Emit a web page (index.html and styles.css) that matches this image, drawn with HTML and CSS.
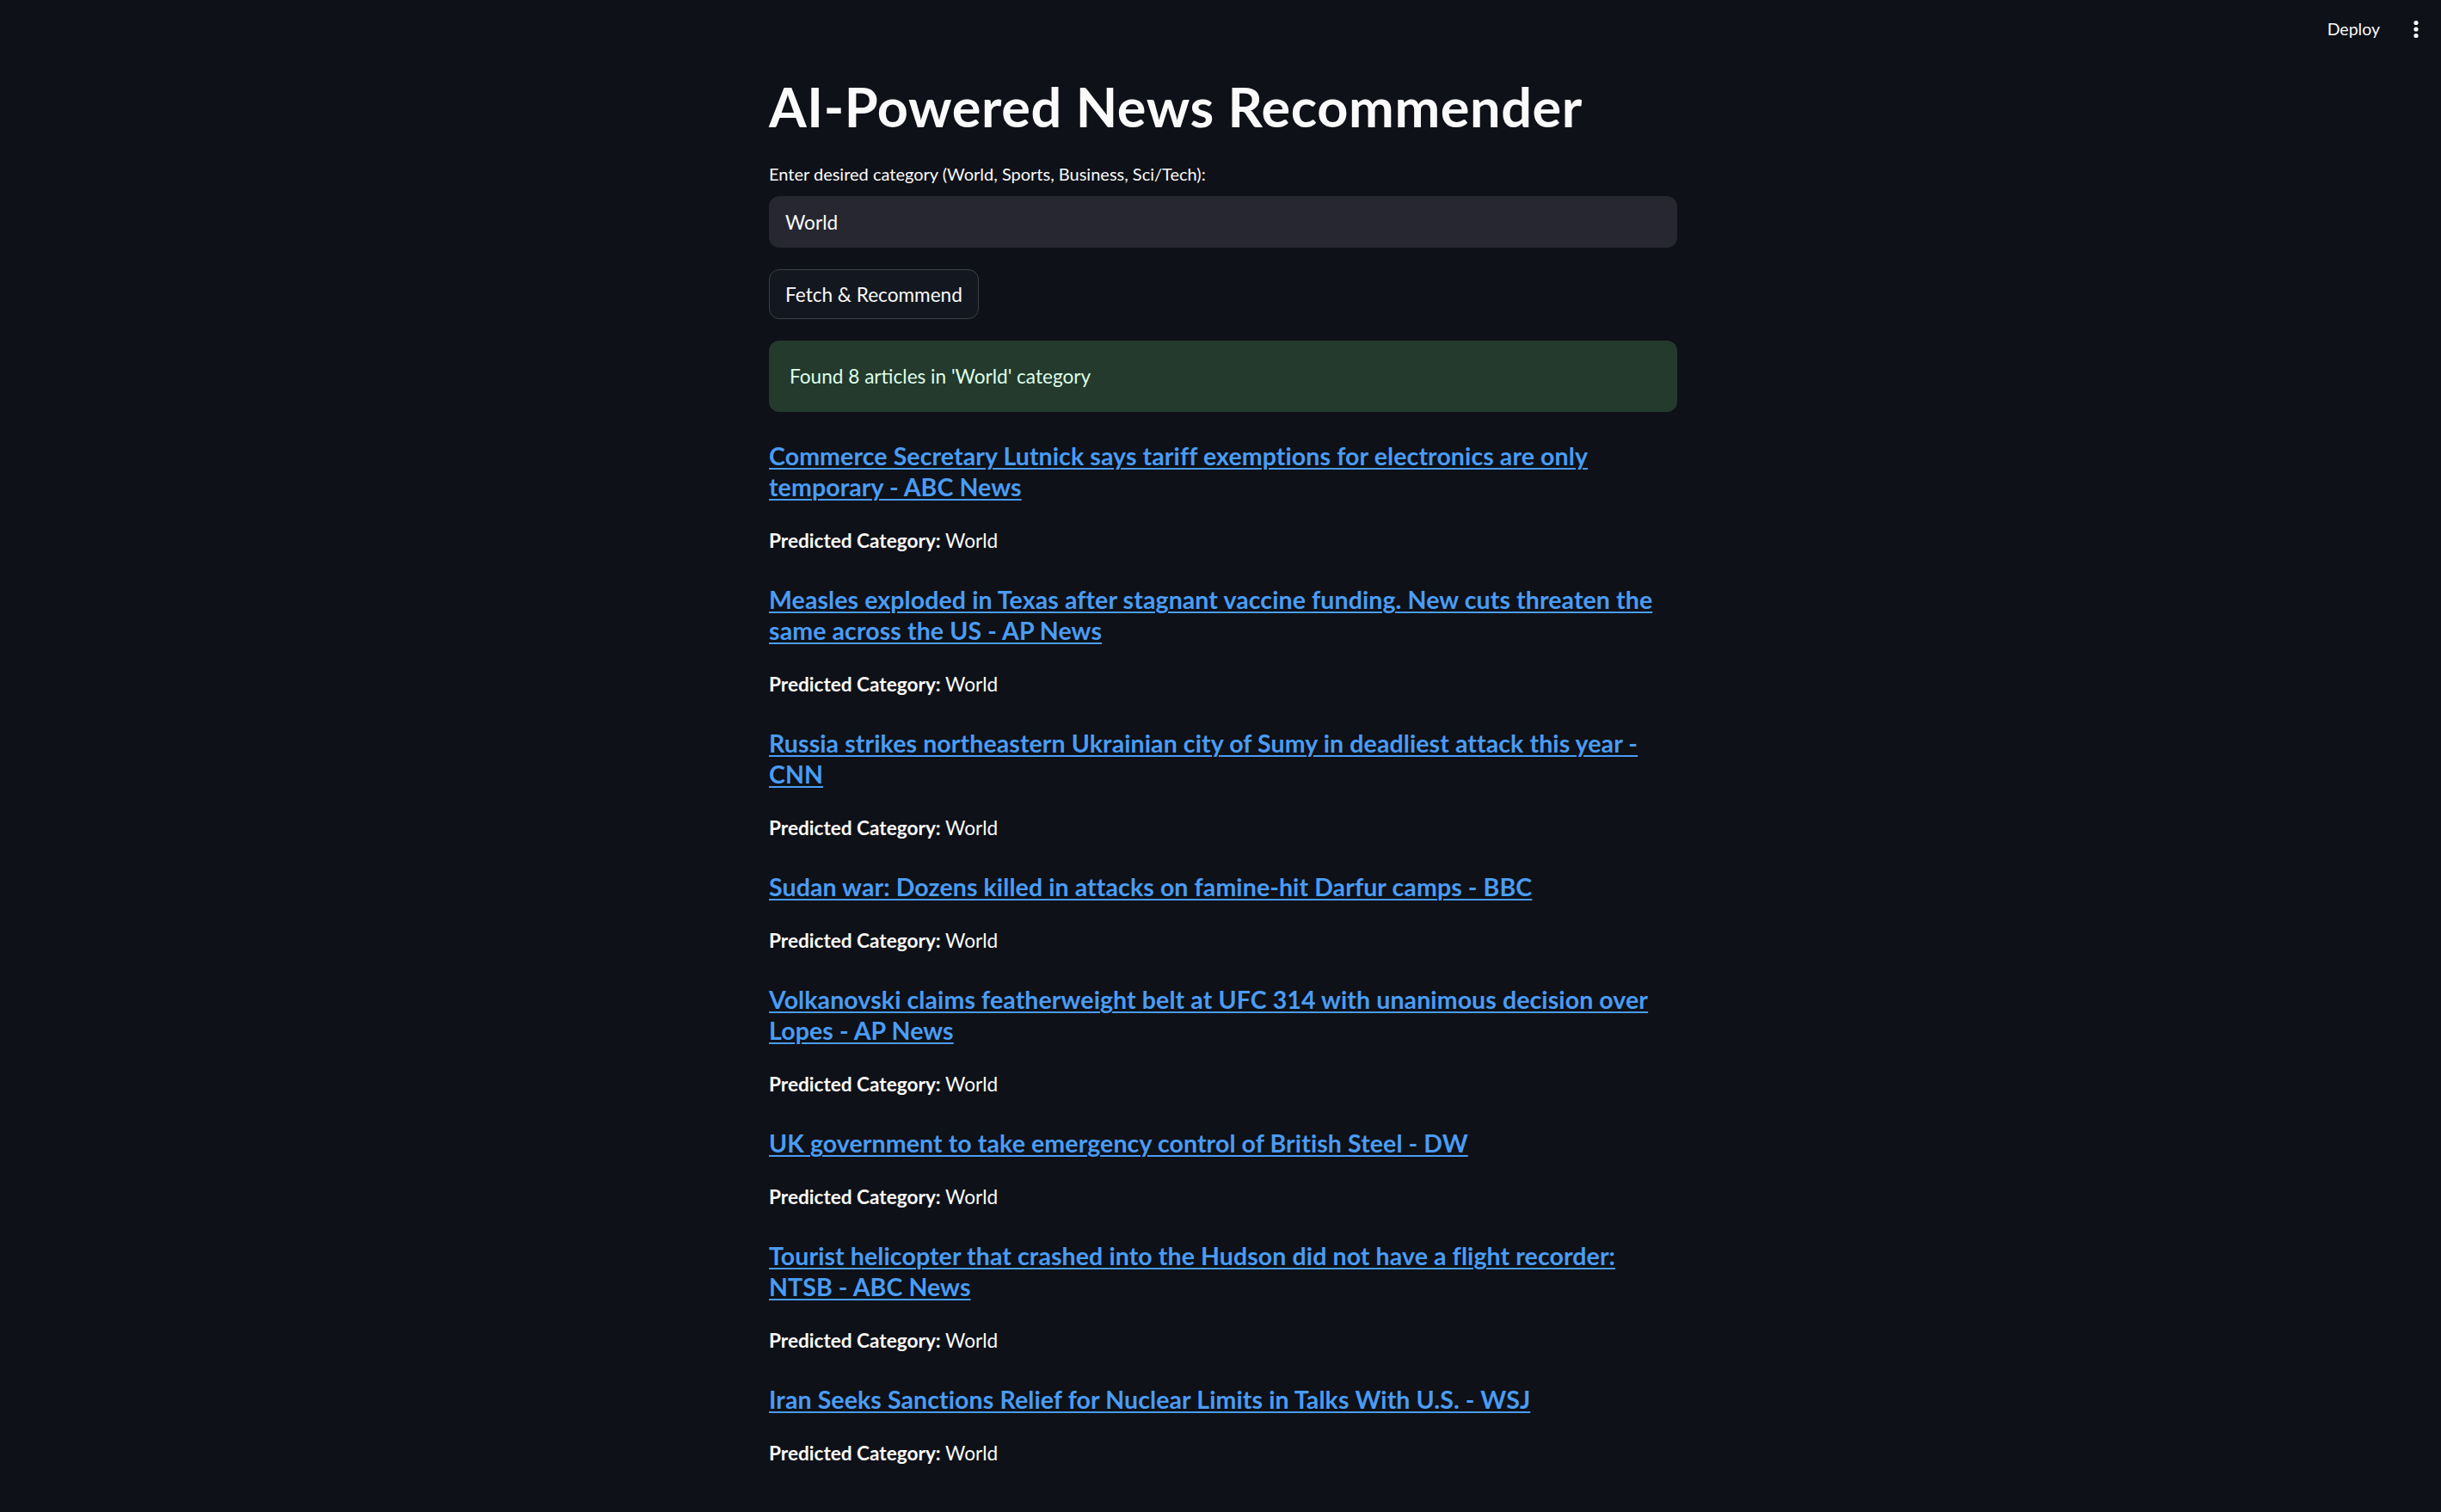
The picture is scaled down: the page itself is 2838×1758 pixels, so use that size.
FILE: index.html
```html
<!DOCTYPE html>
<html lang="en">
<head>
<meta charset="utf-8">
<title>AI-Powered News Recommender</title>
<link rel="stylesheet" href="styles.css">
</head>
<body>
<header class="app-header">
  <span class="deploy">Deploy</span>
  <span class="menu" aria-label="Main menu">
    <svg width="8" height="24" viewBox="0 0 8 24"><circle cx="4" cy="4.5" r="2.6" fill="#fafafa"/><circle cx="4" cy="12" r="2.6" fill="#fafafa"/><circle cx="4" cy="19.5" r="2.6" fill="#fafafa"/></svg>
  </span>
</header>
<main class="block">
  <h1 class="title">AI-Powered News Recommender</h1>
  <div class="field">
    <label class="label">Enter desired category (World, Sports, Business, Sci/Tech):</label>
    <div class="input">World</div>
  </div>
  <div class="btn-row"><button class="btn">Fetch &amp; Recommend</button></div>
  <div class="alert">Found 8 articles in 'World' category</div>

  <h5 class="headline"><a href="#">Commerce Secretary Lutnick says tariff exemptions for electronics are only temporary - ABC News</a></h5>
  <p class="pred"><strong>Predicted Category:</strong> World</p>

  <h5 class="headline"><a href="#">Measles exploded in Texas after stagnant vaccine funding. New cuts threaten the same across the US - AP News</a></h5>
  <p class="pred"><strong>Predicted Category:</strong> World</p>

  <h5 class="headline"><a href="#">Russia strikes northeastern Ukrainian city of Sumy in deadliest attack this year - CNN</a></h5>
  <p class="pred"><strong>Predicted Category:</strong> World</p>

  <h5 class="headline"><a href="#">Sudan war: Dozens killed in attacks on famine-hit Darfur camps - BBC</a></h5>
  <p class="pred"><strong>Predicted Category:</strong> World</p>

  <h5 class="headline"><a href="#">Volkanovski claims featherweight belt at UFC 314 with unanimous decision over Lopes - AP News</a></h5>
  <p class="pred"><strong>Predicted Category:</strong> World</p>

  <h5 class="headline"><a href="#">UK government to take emergency control of British Steel - DW</a></h5>
  <p class="pred"><strong>Predicted Category:</strong> World</p>

  <h5 class="headline"><a href="#">Tourist helicopter that crashed into the Hudson did not have a flight recorder: NTSB - ABC News</a></h5>
  <p class="pred"><strong>Predicted Category:</strong> World</p>

  <h5 class="headline"><a href="#">Iran Seeks Sanctions Relief for Nuclear Limits in Talks With U.S. - WSJ</a></h5>
  <p class="pred"><strong>Predicted Category:</strong> World</p>
</main>
</body>
</html>
```

FILE: styles.css
```css
html, body {
  margin: 0;
  padding: 0;
  background: #0e1117;
  color: #fafafa;
  font-family: Lato, "Noto Sans", sans-serif;
}

.app-header {
  height: 66px;
  display: flex;
  justify-content: flex-end;
  align-items: center;
  gap: 27px;
  padding-right: 14px;
}

.deploy {
  font-size: 19.5px;
  color: #fafafa;
}

.menu {
  width: 30px;
  display: flex;
  justify-content: center;
  align-items: center;
  padding-top: 2px;
}

.block {
  width: 1056px;
  margin-left: calc(50% - 525px);
  padding: 18px 0 60px;
  display: flex;
  flex-direction: column;
  gap: 24px;
}

.title {
  margin: 0 0 0.5px;
  font-size: 63px;
  line-height: 79px;
  font-weight: 700;
  letter-spacing: 0.6px;
}

.field {
  display: flex;
  flex-direction: column;
  gap: 12.5px;
}

.label {
  font-size: 20px;
  line-height: 28px;
}

.input {
  height: 60px;
  box-sizing: border-box;
  background: #262730;
  border-radius: 12px;
  padding: 0 19px;
  display: flex;
  align-items: center;
  font-size: 22.6px;
  color: #fafafa;
}

.btn-row {
  margin-top: 1px;
  display: flex;
}

.btn {
  height: 58px;
  box-sizing: border-box;
  padding: 0 18px;
  background: #13171f;
  border: 1.5px solid #3d4047;
  border-radius: 12px;
  color: #fafafa;
  font-family: inherit;
  font-size: 22.6px;
}

.alert {
  margin: 1px 0 2px;
  height: 83px;
  box-sizing: border-box;
  padding: 0 24px;
  display: flex;
  align-items: center;
  background: #233a2c;
  border-radius: 12px;
  color: #dffde9;
  font-size: 22.6px;
}

.headline {
  margin: 7px 0 2px;
  font-size: 28.5px;
  line-height: 36px;
  font-weight: 700;
  letter-spacing: 0.1px;
}

.headline a {
  color: #4a9cf5;
  text-decoration: underline;
  text-decoration-thickness: 2px;
  text-underline-offset: 3px;
}

.pred {
  margin: 0;
  font-size: 22.6px;
  line-height: 38px;
}

.pred strong {
  font-weight: 700;
}
```
